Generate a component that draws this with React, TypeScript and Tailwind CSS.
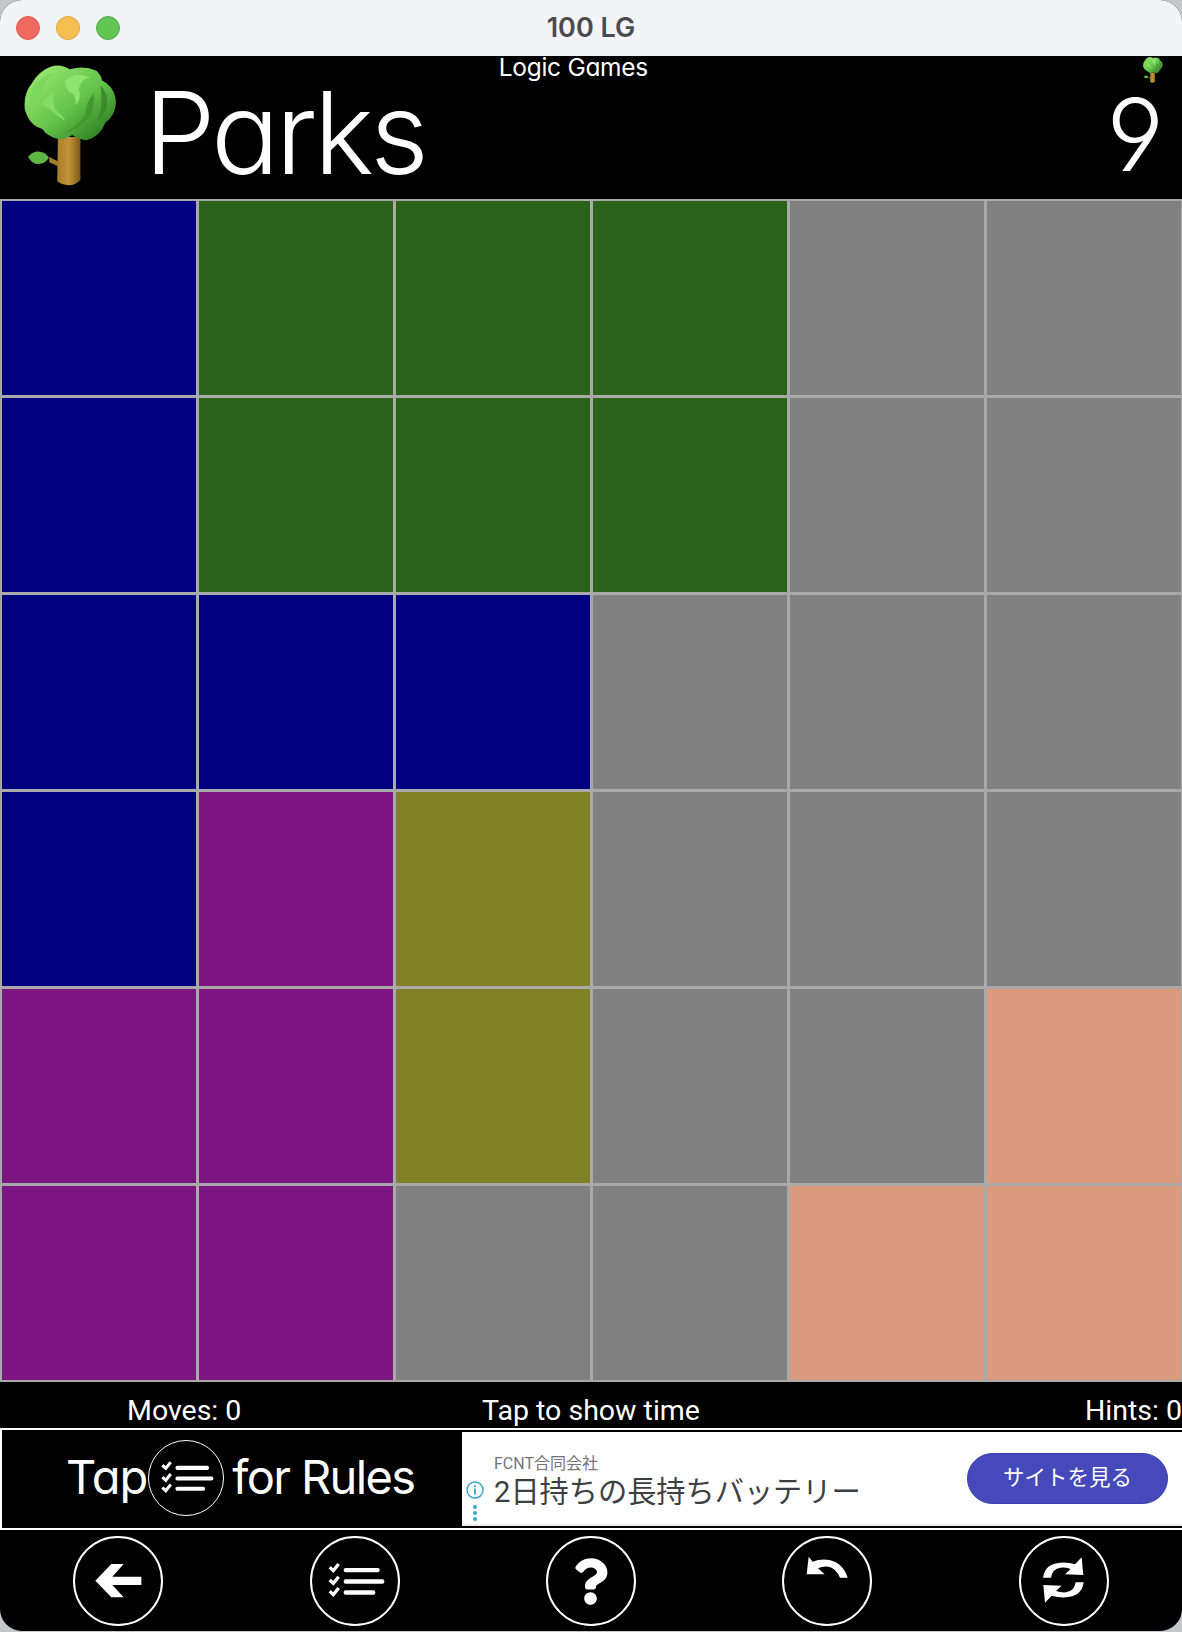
import React from 'react';
import { FaQuestion } from 'react-icons/fa';

const cellColors: Record<string, string> = {
  B: 'bg-[#000080]',
  G: 'bg-[#2b6119]',
  X: 'bg-[#808080]',
  P: 'bg-[#7e1681]',
  O: 'bg-[#808026]',
  S: 'bg-[#dc9a7f]',
};

const board = ['BGGGXX', 'BGGGXX', 'BBBXXX', 'BPOXXX', 'PPOXXS', 'PPXXSS'];

const geometric = "font-['Inter',sans-serif] [font-feature-settings:'cv11','ss01']";

const Tree: React.FC<{ id: string; className?: string }> = ({ id, className }) => (
  <svg viewBox="70 45 280 365" className={className}>
    <defs>
      <linearGradient id={`${id}-crown`} x1="0.1" y1="0.1" x2="0.9" y2="0.9">
        <stop offset="0" stopColor="#96e66e" />
        <stop offset="0.55" stopColor="#64c24a" />
        <stop offset="1" stopColor="#2f7f22" />
      </linearGradient>
      <linearGradient id={`${id}-trunk`} x1="0" y1="0" x2="1" y2="0">
        <stop offset="0" stopColor="#a97c26" />
        <stop offset="0.5" stopColor="#c2953a" />
        <stop offset="1" stopColor="#7d5718" />
      </linearGradient>
    </defs>
    <path d="M146 338 Q160 345 172 350 L172 335 Q158 330 146 322 Z" fill="#a57a28" />
    <path d="M82 322 Q100 300 125 308 Q140 314 145 325 Q130 348 105 343 Q90 338 82 322 Z" fill="#5cb843" />
    <path d="M172 262 L240 262 L240 392 Q225 408 205 408 Q182 406 170 395 Z" fill={`url(#${id}-trunk)`} />
    <path
      d="M175 268 Q140 262 125 238 Q85 228 72 178 Q68 130 92 102 Q115 62 150 50 Q180 40 208 58 Q250 45 288 62 Q305 78 305 92 Q345 112 347 158 Q345 198 316 218 Q300 262 258 272 Q232 268 215 256 Q195 270 175 268 Z"
      fill={`url(#${id}-crown)`}
    />
    <path d="M100 105 Q130 75 160 68 Q130 95 125 130 Q105 150 92 165 Q88 130 100 105 Z" fill="#7cd85c" />
    <path d="M195 90 Q225 65 270 82 Q240 85 235 120 Q245 150 225 165 Q230 135 205 125 Q190 110 195 90 Z" fill="#8ee46e" />
    <path d="M120 165 Q145 130 165 125 Q150 150 165 180 Q190 200 195 215 Q165 195 150 180 Q130 165 120 165 Z" fill="#84dc66" />
    <path d="M190 250 Q235 225 255 195 Q255 160 280 130 Q285 165 270 200 Q235 240 190 250 Z" fill="#45982f" />
    <path d="M300 105 Q325 130 320 170 Q310 200 290 215 Q312 170 300 105 Z" fill="#3c8a2a" />
  </svg>
);

const ListIcon: React.FC<{ className?: string }> = ({ className }) => (
  <svg viewBox="14 18 270 270" className={className}>
    {[0, 38, 72].map((y) => (
      <polyline key={y} points={`73,${112 + y} 84,${122 + y} 100,${102 + y}`} fill="none" stroke="white" strokeWidth="10" />
    ))}
    <rect x="115" y="114" width="108" height="13" rx="6" fill="white" />
    <rect x="115" y="148" width="122" height="13" rx="6" fill="white" />
    <rect x="115" y="181" width="95" height="13" rx="6" fill="white" />
  </svg>
);

const RoundButton: React.FC<{ children: React.ReactNode }> = ({ children }) => (
  <div className="flex justify-center">
    <button className="flex h-[90px] w-[90px] items-center justify-center rounded-full border-[2.5px] border-white">
      {children}
    </button>
  </div>
);

const App: React.FC = () => {
  return (
    <div className="h-[1632px] w-[1182px] bg-[#c4c6c9]">
      <div className="flex h-[1631px] flex-col overflow-hidden rounded-[22px] bg-black">
        {/* Title bar */}
        <div className="relative flex h-14 shrink-0 items-center gap-4 bg-[#f2f4f8] pl-4">
          <span className="h-6 w-6 rounded-full border border-[#dd5a50] bg-[#ee6a5f]" />
          <span className="h-6 w-6 rounded-full border border-[#dea63e] bg-[#f6be50]" />
          <span className="h-6 w-6 rounded-full border border-[#52ad46] bg-[#61c554]" />
          <span className="absolute inset-x-0 text-center font-['Inter',sans-serif] text-[27px] font-semibold text-[#4b4b4d]">
            100 LG
          </span>
        </div>

        {/* Header */}
        <div className="flex h-[143px] shrink-0 text-white">
          <div className="flex items-start pl-[24px] pt-[9px]">
            <Tree id="big" className="h-[121px] w-[93px]" />
            <span className={`${geometric} ml-[27px] mt-[8px] text-[114px] font-[350] leading-[120px] tracking-[-4px]`}>Parks</span>
          </div>
          <span className={`${geometric} ml-[74px] mt-[-4px] text-[24.5px] font-normal leading-[30px] tracking-[-0.3px]`}>Logic Games</span>
          <div className="ml-auto flex flex-col items-end pr-[18px]">
            <Tree id="small" className="mr-px mt-px h-[26px] w-[20px]" />
            <span className={`${geometric} mt-[-2px] text-[100px] font-[350] leading-[108px]`}>9</span>
          </div>
        </div>

        {/* Board */}
        <div className="grid shrink-0 grid-cols-[repeat(6,194px)] grid-rows-[repeat(6,194px)] gap-[3px] bg-[#a9a9a9] pb-[2px] pl-[2px] pr-[1px] pt-[2px]">
          {board.flatMap((row, r) =>
            row.split('').map((c, i) => <div key={`${r}-${i}`} className={cellColors[c]} />)
          )}
        </div>

        {/* Status */}
        <div className="grid h-[46px] shrink-0 grid-cols-3 items-center pt-[12px] font-['Roboto',sans-serif] text-[28.5px] leading-[30px] text-white">
          <span className="pl-[127px]">Moves: 0</span>
          <span className="text-center">Tap to show time</span>
          <span className="text-right">Hints: 0</span>
        </div>

        {/* Rules + ad */}
        <div className="flex h-[102px] shrink-0 border-y-2 border-l-2 border-white">
          <div className={`${geometric} flex w-[460px] shrink-0 items-center pb-[3px] pl-[64px] text-[47px] font-normal text-white`}>
            <span className="tracking-[-1px]">Tap</span>
            <span className="ml-[1px] mt-[1px] flex h-[76px] w-[76px] shrink-0 items-center justify-center overflow-visible rounded-full border-[1.5px] border-white">
              <ListIcon className="h-[84px] w-[84px] shrink-0" />
            </span>
            <span className="ml-[8px] tracking-[-1.6px]">for Rules</span>
          </div>
          <div className="my-[2px] flex flex-1 items-center border-b-2 border-[#efefef] bg-white">
            <div className="flex w-[26px] shrink-0 flex-col items-center self-end pb-[3px]">
              <svg viewBox="0 0 18 18" className="h-[18px] w-[18px]">
                <circle cx="9" cy="9" r="8" fill="none" stroke="#2fa6cf" strokeWidth="1.4" />
                <rect x="8.1" y="7.5" width="1.8" height="6" fill="#2fa6cf" />
                <rect x="8.1" y="4.2" width="1.8" height="1.9" fill="#2fa6cf" />
              </svg>
              <div className="mt-[6px] flex flex-col gap-[2px]">
                <span className="h-[4px] w-[4px] rounded-full bg-[#3aa8c8]" />
                <span className="h-[4px] w-[4px] rounded-full bg-[#3aa8c8]" />
                <span className="h-[4px] w-[4px] rounded-full bg-[#3aa8c8]" />
              </div>
            </div>
            <div className="ml-[6px] flex-1 pt-[8px] font-['Roboto','Noto_Sans_CJK_JP',sans-serif]">
              <div className="text-[16px] leading-[20px] text-[#757575]">FCNT合同会社</div>
              <div className="text-[29.2px] leading-[36px] text-[#3c4043]">2日持ちの長持ちバッテリー</div>
            </div>
            <button className="mr-[14px] flex h-[51px] w-[201px] items-center justify-center rounded-full border border-[#3a3eb0] bg-[#4649b9] font-['Roboto','Noto_Sans_CJK_JP',sans-serif] text-[21.5px] text-white">
              サイトを見る
            </button>
          </div>
        </div>

        {/* Footer actions */}
        <div className="grid flex-1 grid-cols-5 pt-[6px]">
          <RoundButton>
            <svg viewBox="10 18 270 270" className="h-[90px] w-[90px] shrink-0">
              <path d="M77 152 L125 102 L162 102 L128 140 L215 140 L215 165 L128 165 L162 202 L125 202 Z" fill="white" />
            </svg>
          </RoundButton>
          <RoundButton>
            <ListIcon className="h-[90px] w-[90px] shrink-0" />
          </RoundButton>
          <RoundButton>
            <FaQuestion className="h-[47px] w-[35px] text-white" />
          </RoundButton>
          <RoundButton>
            <svg viewBox="8 18 270 270" className="h-[90px] w-[90px] shrink-0">
              <path d="M88 80 L82 133 L136 133 L116 115 Q130 108 148 110 Q170 115 182 143 L205 143 Q192 100 150 90 Q125 85 100 95 Z" fill="white" />
            </svg>
          </RoundButton>
          <RoundButton>
            <svg viewBox="0 18 270 270" className="h-[90px] w-[90px] shrink-0">
              <path d="M72 143 Q78 100 125 98 Q150 97 168 103 L188 82 L193 135 L138 133 L155 117 Q140 112 125 113 Q100 116 96 143 Z" fill="white" />
              <path d="M194 157 Q188 200 141 202 Q116 203 98 197 L78 218 L73 165 L128 167 L111 183 Q126 188 141 187 Q166 184 170 157 Z" fill="white" />
            </svg>
          </RoundButton>
        </div>
      </div>
    </div>
  );
};

export default App;
